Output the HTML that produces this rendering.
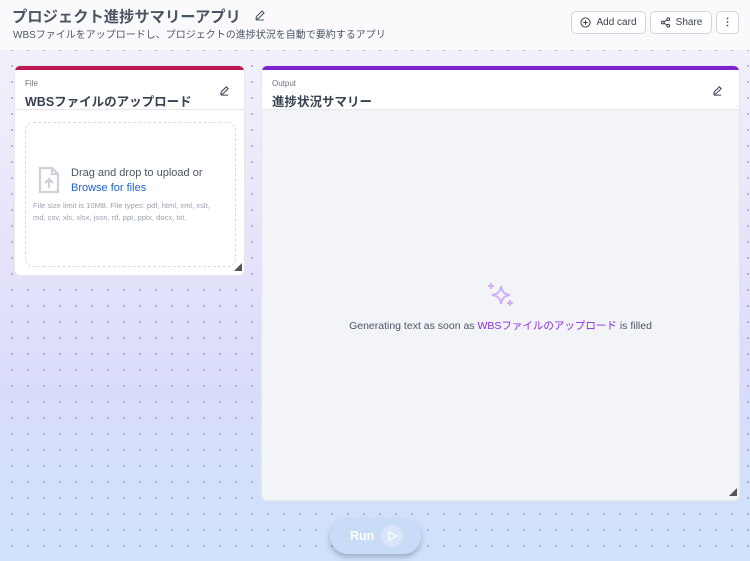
<!DOCTYPE html>
<html><head><meta charset="utf-8"><style>
*{box-sizing:border-box;margin:0;padding:0}
body{width:750px;height:561px;overflow:hidden;font-family:"Liberation Sans","Noto Sans CJK JP",sans-serif;position:relative;
background:linear-gradient(180deg,#f1f1fb 50px,#e6e3fa 250px,#d9dcfa 380px,#cfe2fb 561px);}
.dots{position:absolute;left:0;top:50px;width:750px;height:511px;background-image:radial-gradient(circle,#a9a6d0 0.8px,transparent 1.2px);background-size:16px 16px;background-position:4px 8px;}
.hdr{position:absolute;left:0;top:0;width:750px;height:50px;background:#fafafd}
.title{position:absolute;left:12px;top:5px;font-size:15.3px;font-weight:bold;color:#4b5563}
.sub{position:absolute;left:13px;top:26px;font-size:10px;color:#4b5563}
.btn{position:absolute;top:11px;height:23px;border:1px solid #d1d5db;border-radius:5px;background:#fff;font-size:10px;color:#374151;display:flex;align-items:center;justify-content:center;gap:5px}
.card{position:absolute;background:#fff;border-radius:6px;border:1px solid #e5e7eb;overflow:hidden}
.card .top{height:4px}
.lbl{position:absolute;left:10px;top:13px;font-size:8px;color:#6b7280}
.ct{position:absolute;left:10px;top:25px;font-size:12.5px;font-weight:bold;color:#374151}
.hl{position:absolute;left:0;right:0;top:43px;border-top:1px solid #e5e7eb}
.pen{position:absolute;top:18px}
</style></head><body>
<div class="dots"></div>
<div class="hdr"></div>
<div class="title">プロジェクト進捗サマリーアプリ</div>
<svg style="position:absolute;left:254px;top:9px" width="12" height="12" viewBox="0 0 12 12" fill="none" stroke="#4b5563" stroke-width="1.1"><path d="M2 10l.5-2.5L8 2l2 2-5.5 5.5L2 10zM2 11h8"/></svg>
<div class="sub">WBSファイルをアップロードし、プロジェクトの進捗状況を自動で要約するアプリ</div>
<div class="btn" style="left:571px;width:75px"><svg width="11" height="11" viewBox="0 0 12 12" fill="none" stroke="#374151" stroke-width="1.1"><circle cx="6" cy="6" r="5"/><path d="M6 3.5v5M3.5 6h5"/></svg>Add card</div>
<div class="btn" style="left:650px;width:62px"><svg width="11" height="11" viewBox="0 0 12 12" fill="none" stroke="#374151" stroke-width="1.1"><circle cx="9" cy="2.5" r="1.5"/><circle cx="3" cy="6" r="1.5"/><circle cx="9" cy="9.5" r="1.5"/><path d="M4.3 5.2l3.4-2M4.3 6.8l3.4 2"/></svg>Share</div>
<div class="btn" style="left:716px;width:23px;font-weight:bold">⋮</div>

<div class="card" style="left:14px;top:65px;width:231px;height:211px">
<div class="top" style="background:#be1850"></div>
<div class="lbl">File</div><div class="ct">WBSファイルのアップロード</div>
<svg class="pen" style="left:204px;top:19px" width="11" height="11" viewBox="0 0 12 12" fill="none" stroke="#374151" stroke-width="1.1"><path d="M2 10l.5-2.5L8 2l2 2-5.5 5.5L2 10zM2 11h8"/></svg>
<div class="hl"></div>
<div style="position:absolute;left:10px;top:56px;width:211px;height:145px;border:1.5px dashed #d8dbe0;border-radius:8px"></div>
<svg style="position:absolute;left:22px;top:100px" width="24" height="29" viewBox="0 0 24 29" fill="none" stroke="#cdd1d8" stroke-width="2.2"><path d="M3 2h12l6 6v18H3z M15 2v6h6"/><path d="M12 22v-9M8 17l4-4 4 4"/></svg>
<div style="position:absolute;left:56px;top:101px;font-size:11px;color:#4b5563">Drag and drop to upload or</div>
<div style="position:absolute;left:56px;top:116px;font-size:11px;color:#1d5fd6">Browse for files</div>
<div style="position:absolute;left:18px;top:134px;width:188px;font-size:7.6px;line-height:11.5px;color:#9ca3af">File size limit is 10MB. File types: pdf, html, xml, xslt, md, csv, xls, xlsx, json, rtf, ppt, pptx, docx, txt.</div>
<div style="position:absolute;right:2px;bottom:2px;font-size:8px;color:#555">◢</div>
</div>

<div class="card" style="left:261px;top:65px;width:479px;height:436px;background:#f3f4f8">
<div class="top" style="background:#7e22ce"></div>
<div style="position:absolute;left:0;right:0;top:4px;height:40px;background:#fff"></div>
<div class="lbl">Output</div><div class="ct">進捗状況サマリー</div>
<svg class="pen" style="left:450px;top:19px" width="11" height="11" viewBox="0 0 12 12" fill="none" stroke="#374151" stroke-width="1.1"><path d="M2 10l.5-2.5L8 2l2 2-5.5 5.5L2 10zM2 11h8"/></svg>
<div class="hl"></div>
<svg style="position:absolute;left:225px;top:215px" width="28" height="28" viewBox="0 0 28 28" fill="none" stroke="#d2b0f7" stroke-width="2"><path d="M14 5c1 6 3 8 9 9-6 1-8 3-9 9-1-6-3-8-9-9 6-1 8-3 9-9z"/><path d="M4 2v6M1 5h6M23 19v6M20 22h6"/></svg>
<div style="position:absolute;left:0;width:477px;top:252px;text-align:center;font-size:10.5px;color:#4b5563">Generating text as soon as <span style="color:#8a2be2">WBSファイルのアップロード</span> is filled</div>
<div style="position:absolute;right:2px;bottom:2px;font-size:8px;color:#555">◢</div>
</div>

<div style="position:absolute;left:330px;top:519px;width:91px;height:35px;border-radius:18px;background:#c9dcf7;box-shadow:0 3px 6px rgba(60,70,100,.35);color:#fff;font-weight:bold;font-size:12.5px">
<span style="position:absolute;left:20px;top:10px">Run</span>
<div style="position:absolute;left:51px;top:6px;width:22px;height:22px;border-radius:50%;background:#d9e6fa"></div>
<svg style="position:absolute;left:57px;top:11px" width="11" height="12" viewBox="0 0 11 12" fill="none" stroke="#fff" stroke-width="1.2"><path d="M2 1.5l7 4.5-7 4.5z"/></svg>
</div>
</body></html>
